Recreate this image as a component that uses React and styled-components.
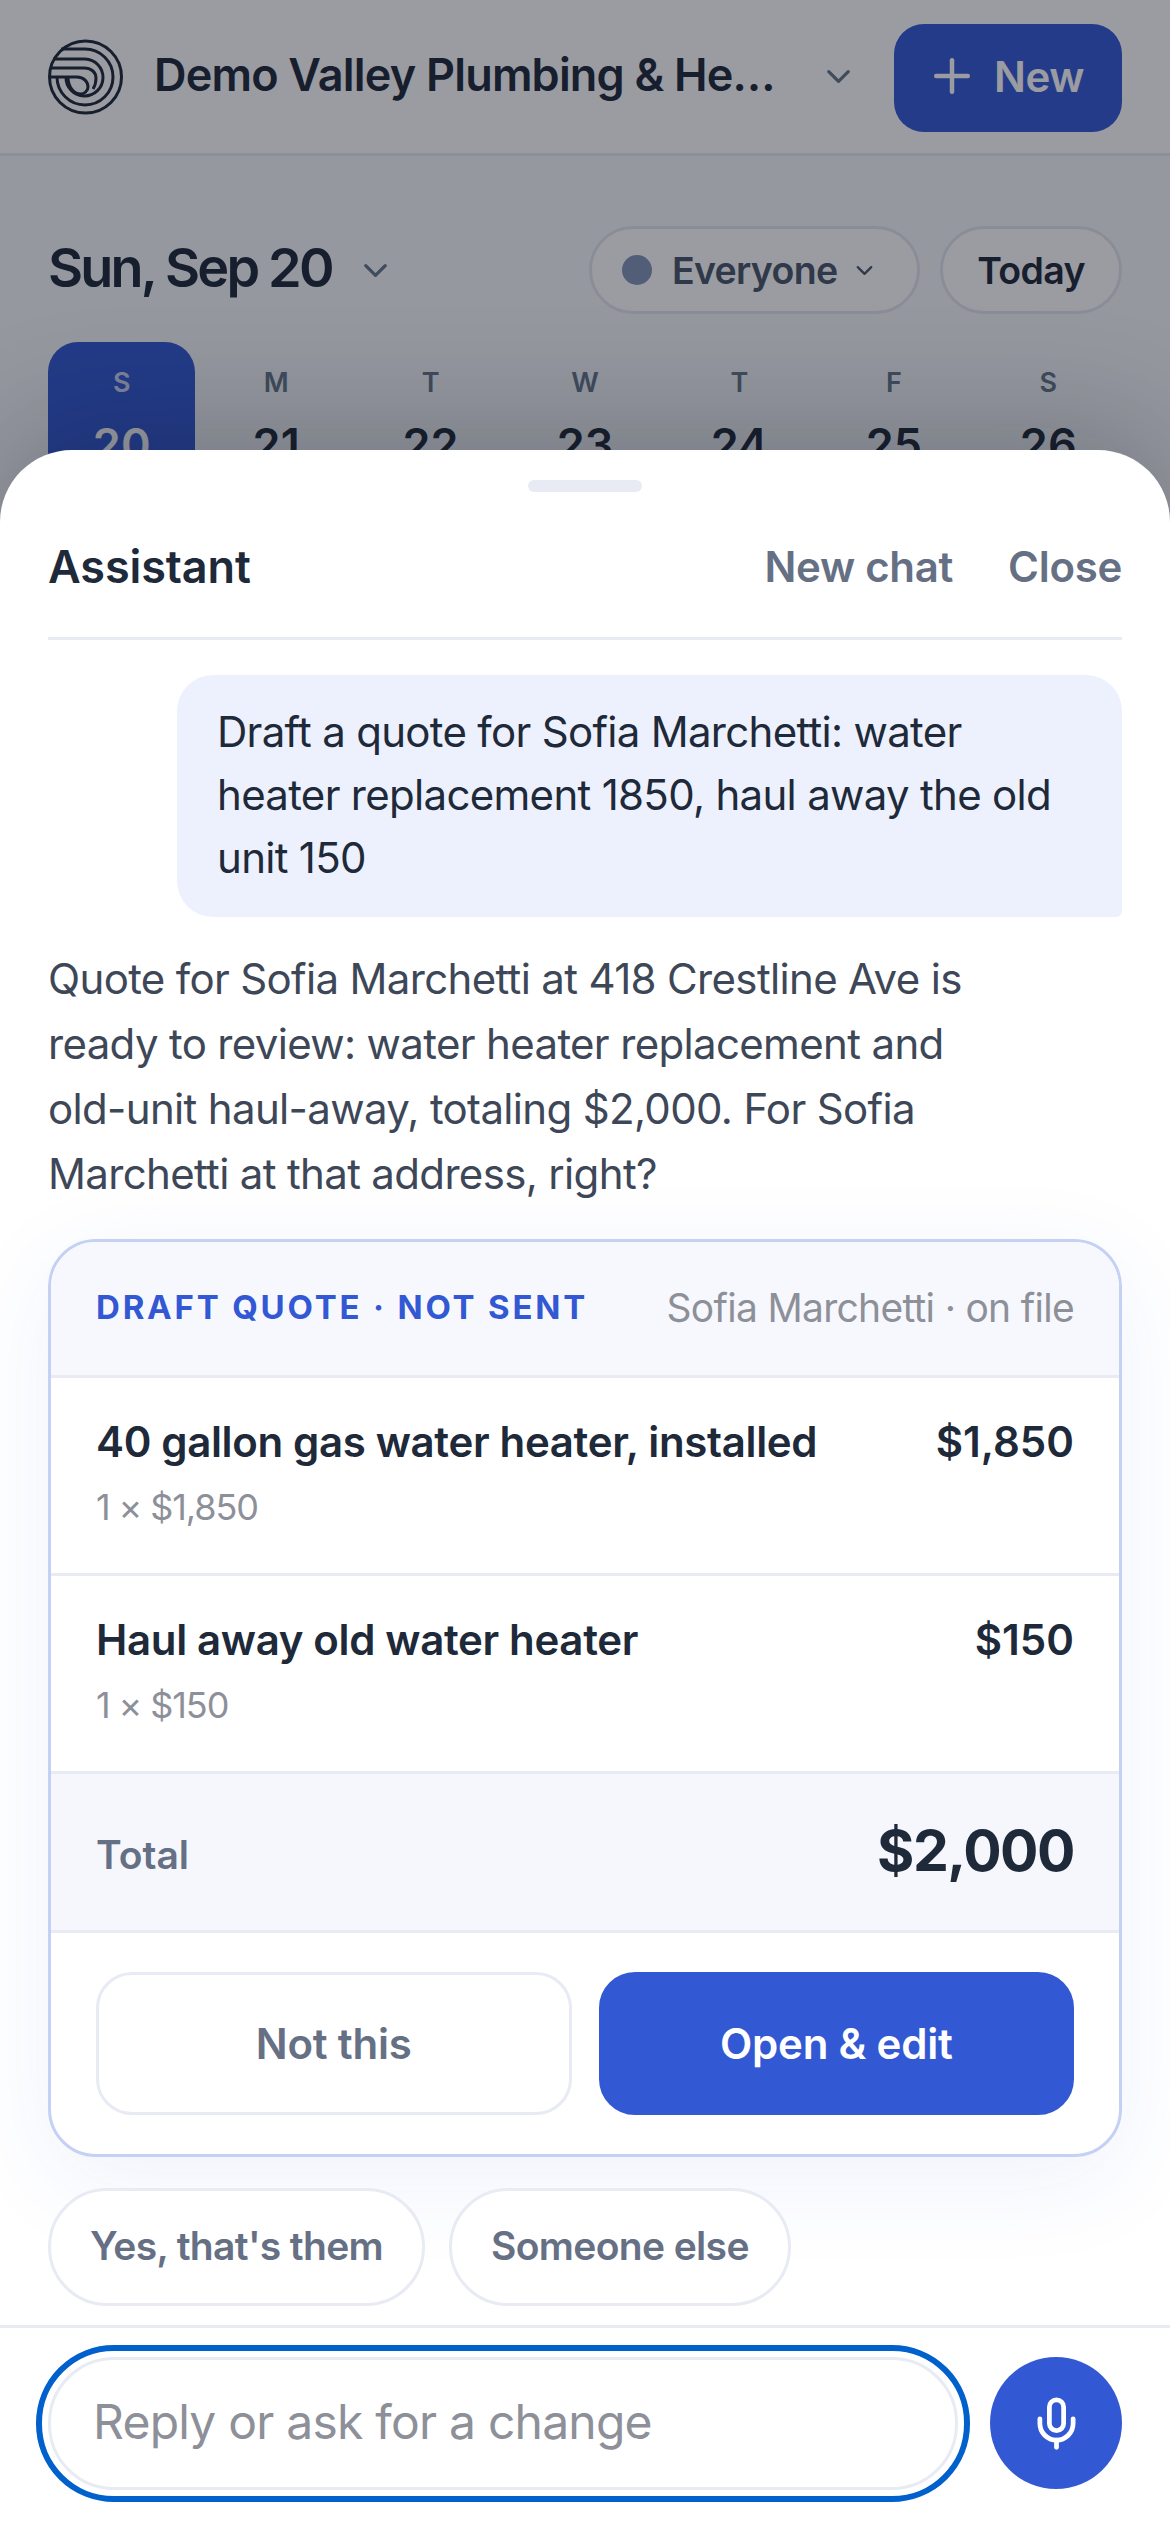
import React from "react";
import styled, { createGlobalStyle } from "styled-components";
import { ChevronDown, Plus, Mic } from "lucide-react";

const Global = createGlobalStyle`
  html, body { margin: 0; padding: 0; background: #fff; }
  * { box-sizing: border-box; }
  body { font-family: Inter, "Liberation Sans", sans-serif; color: #1e2939; }
`;

const Page = styled.div`
  position: relative;
  width: 1170px;
  height: 2532px;
  overflow: hidden;
  background: #f7f8fb;
`;
const TopBar = styled.header`
  display: flex;
  align-items: center;
  height: 156px;
  padding: 0 48px;
  background: #fff;
  border-bottom: 3px solid #e8ebf3;
`;
const Brand = styled.span`
  margin: 0 0 5px 31px;
  width: 630px;
  font-size: 45px;
  font-weight: 600;
  letter-spacing: -0.8px;
  white-space: nowrap;
`;
const BrandCaret = styled(ChevronDown)`
  margin-left: 35px;
  color: #64748b;
`;
const NewButton = styled.button`
  margin: 2px 0 0 auto;
  display: flex;
  align-items: center;
  justify-content: center;
  gap: 15px;
  width: 228px;
  height: 108px;
  padding: 0 7px 3px 0;
  border: 0;
  border-radius: 30px;
  background: #3358d4;
  color: #fff;
  font: 600 42px Inter, sans-serif;
  letter-spacing: -0.4px;
`;
const DateRow = styled.div`
  display: flex;
  align-items: center;
  padding: 70px 48px 0;
  height: 158px;
`;
const DateTitle = styled.h1`
  margin: 0 0 6px;
  font-size: 54px;
  font-weight: 600;
  letter-spacing: -2.8px;
`;
const DateCaret = styled(ChevronDown)`
  margin-left: 24px;
  color: #64748b;
`;
const Pill = styled.button`
  display: flex;
  align-items: center;
  height: 88px;
  border: 3px solid #e3e6ee;
  border-radius: 44px;
  background: #fff;
  font: 600 37.5px Inter, sans-serif;
  letter-spacing: -0.7px;
`;
const EveryonePill = styled(Pill)`
  margin-left: auto;
  width: 331px;
  padding: 0 0 0 30px;
  color: #475569;
`;
const Dot = styled.i`
  width: 30px;
  height: 30px;
  border-radius: 50%;
  background: #8493b8;
  margin-right: 20px;
`;
const PillCaret = styled(ChevronDown)`
  margin-left: 14px;
`;
const TodayPill = styled(Pill)`
  margin-left: 20px;
  width: 182px;
  justify-content: center;
  color: #1e2939;
`;
const DayStrip = styled.div`
  display: grid;
  grid-template-columns: repeat(7, 1fr);
  gap: 7px;
  padding: 0 48px;
  margin-top: 28px;
`;
const Day = styled.div`
  display: flex;
  flex-direction: column;
  align-items: center;
  height: 150px;
  padding-top: 24px;
  border-radius: 30px;
  background: ${(p) => (p.$on ? "#3358d4" : "transparent")};
  color: ${(p) => (p.$on ? "#fff" : "#1e2939")};
`;
const DayLetter = styled.span`
  font-size: 27px;
  font-weight: 600;
  opacity: ${(p) => (p.$on ? 0.75 : 1)};
  color: ${(p) => (p.$on ? "#fff" : "#64748b")};
`;
const DayNum = styled.span`
  margin-top: 18px;
  font-size: 45px;
  font-weight: 600;
`;
const Scrim = styled.div`
  position: absolute;
  inset: 0;
  background: rgba(15, 18, 32, 0.42);
`;
const Sheet = styled.section`
  position: absolute;
  left: 0;
  right: 0;
  top: 450px;
  bottom: 0;
  display: flex;
  flex-direction: column;
  background: #fff;
  border-radius: 72px 72px 0 0;
  box-shadow: 0 -24px 120px rgba(15, 18, 32, 0.22);
`;
const Handle = styled.div`
  align-self: center;
  width: 114px;
  height: 12px;
  margin-top: 30px;
  border-radius: 6px;
  background: #e8ebf3;
`;
const SheetHead = styled.div`
  display: flex;
  align-items: center;
  margin: 0 48px;
  height: 148px;
  padding-top: 4px;
  border-bottom: 3px solid #e8ebf3;
`;
const SheetTitle = styled.h2`
  margin: 0;
  font-size: 45px;
  font-weight: 600;
  letter-spacing: -0.1px;
`;
const HeadLink = styled.button`
  margin-left: ${(p) => (p.$first ? "auto" : `${p.$gap}px`)};
  border: 0;
  padding: 0;
  background: none;
  color: #667085;
  font: 600 42px Inter, sans-serif;
  letter-spacing: -0.3px;
`;
const Thread = styled.div`
  flex: 1;
  display: flex;
  flex-direction: column;
  padding: 35px 48px 0;
`;
const Bubble = styled.div`
  margin-left: 129px;
  height: 242px;
  padding: 25px 40px;
  background: #edf1fd;
  border-radius: 36px 36px 6px 36px;
  font-size: 42px;
  line-height: 63px;
  letter-spacing: -0.7px;
  color: #1e2939;
`;
const Reply = styled.p`
  margin: 29px 0 0;
  font-size: 42px;
  line-height: 65px;
  letter-spacing: -0.66px;
  color: #3d4757;
`;
const Card = styled.div`
  margin-top: 33px;
  border: 3px solid #c4d1f5;
  border-radius: 48px;
  background: #fff;
  overflow: hidden;
  box-shadow: 0 24px 96px rgba(51, 88, 212, 0.08);
`;
const CardHead = styled.div`
  display: flex;
  align-items: center;
  justify-content: space-between;
  height: 136px;
  padding: 0 45px 3px;
  background: #f7f8fd;
  border-bottom: 3px solid #e8ebf3;
`;
const Kicker = styled.span`
  font-size: 33px;
  font-weight: 700;
  letter-spacing: 2.8px;
  color: #3358d4;
`;
const Meta = styled.span`
  font-size: 39px;
  letter-spacing: -0.7px;
  color: #8d9099;
`;
const Line = styled.div`
  display: flex;
  justify-content: space-between;
  height: 198px;
  padding: 38px 45px 0;
  border-bottom: 3px solid #e8ebf3;
`;
const LineName = styled.div`
  font-size: 42px;
  line-height: 52px;
  font-weight: 600;
  letter-spacing: -0.34px;
`;
const LineQty = styled.div`
  margin-top: 14px;
  font-size: 36px;
  line-height: 50px;
  letter-spacing: -1.1px;
  color: #8d9099;
`;
const LinePrice = styled.div`
  font-size: 42px;
  line-height: 52px;
  font-weight: 600;
`;
const TotalRow = styled.div`
  display: flex;
  align-items: center;
  justify-content: space-between;
  height: 159px;
  padding: 0 45px 3px;
  background: #f6f7fc;
  border-bottom: 3px solid #e8ebf3;
`;
const TotalLabel = styled.span`
  font-size: 39px;
  font-weight: 600;
  color: #667085;
  margin-top: 8px;
`;
const TotalValue = styled.span`
  font-size: 57px;
  font-weight: 700;
  letter-spacing: -1.5px;
`;
const Actions = styled.div`
  display: grid;
  grid-template-columns: 1fr 1fr;
  gap: 27px;
  padding: 39px 45px 39px;
`;
const ActionButton = styled.button`
  height: 143px;
  border-radius: 36px;
  border: 3px solid ${(p) => (p.$primary ? "#3358d4" : "#e8ebf3")};
  background: ${(p) => (p.$primary ? "#3358d4" : "#fff")};
  color: ${(p) => (p.$primary ? "#fff" : "#667085")};
  font: 600 42px Inter, sans-serif;
  letter-spacing: -0.2px;
`;
const Chips = styled.div`
  display: flex;
  gap: 24px;
  margin-top: 31px;
`;
const Chip = styled.button`
  height: 118px;
  padding: 0 39px 3px;
  border: 3px solid #e8ebf3;
  border-radius: 59px;
  background: #fff;
  color: #667085;
  font: 600 39px Inter, sans-serif;
  letter-spacing: -0.65px;
`;
const Composer = styled.footer`
  display: flex;
  align-items: center;
  gap: 32px;
  height: 207px;
  padding: 0 48px 14px;
  border-top: 3px solid #e8ebf3;
  background: #fff;
`;
const ReplyBox = styled.div`
  flex: 1;
  display: flex;
  align-items: center;
  height: 133px;
  padding: 0 42px 3px;
  border: 3px solid #e8ebf3;
  border-radius: 66px;
  outline: 6px solid #0060cc;
  outline-offset: 6px;
  font-size: 48px;
  letter-spacing: -0.77px;
  color: #8d9099;
`;
const MicButton = styled.button`
  display: flex;
  align-items: center;
  justify-content: center;
  width: 132px;
  height: 132px;
  flex: none;
  border: 0;
  border-radius: 50%;
  background: #3358d4;
  color: #fff;
`;

const Logo = () => (
  <svg width="75" height="76" viewBox="0 0 75 76" fill="none" stroke="#1e2939" strokeWidth="3">
    <circle cx="37.5" cy="38" r="36" />
    <path d="M13 10H37A28 28 0 1 1 9 38" />
    <path d="M5 20H37A18.5 18.5 0 1 1 18 38" />
    <path d="M2 29H36C43 29 48 33 48 39C48 44 47 47 45 50" />
    <path d="M1 38H29C36 38 40 43 40 48C40 52 36 55 33 55C25 55 20 47 20 38" />
  </svg>
);

const days = [["S", 20], ["M", 21], ["T", 22], ["W", 23], ["T", 24], ["F", 25], ["S", 26]];

export default function App() {
  return (
    <Page>
      <Global />
      <TopBar>
        <Logo />
        <Brand>Demo Valley Plumbing &amp; He…</Brand>
        <BrandCaret size={39} strokeWidth={2} />
        <NewButton>
          <Plus size={54} strokeWidth={2} />
          New
        </NewButton>
      </TopBar>
      <DateRow>
        <DateTitle>Sun, Sep 20</DateTitle>
        <DateCaret size={39} strokeWidth={2} />
        <EveryonePill>
          <Dot />
          Everyone
          <PillCaret size={27} strokeWidth={2} />
        </EveryonePill>
        <TodayPill>Today</TodayPill>
      </DateRow>
      <DayStrip>
        {days.map(([l, n], i) => (
          <Day key={n} $on={i === 0}>
            <DayLetter $on={i === 0}>{l}</DayLetter>
            <DayNum>{n}</DayNum>
          </Day>
        ))}
      </DayStrip>
      <Scrim />
      <Sheet>
        <Handle />
        <SheetHead>
          <SheetTitle>Assistant</SheetTitle>
          <HeadLink $first>New chat</HeadLink>
          <HeadLink $gap={55}>Close</HeadLink>
        </SheetHead>
        <Thread>
          <Bubble>Draft a quote for Sofia Marchetti: water heater replacement 1850, haul away the old unit 150</Bubble>
          <Reply>
            Quote for Sofia Marchetti at 418 Crestline Ave is<br />
            ready to review: water heater replacement and<br />
            old-unit haul-away, totaling $2,000. For Sofia<br />
            Marchetti at that address, right?
          </Reply>
          <Card>
            <CardHead>
              <Kicker>DRAFT QUOTE · NOT SENT</Kicker>
              <Meta>Sofia Marchetti · on file</Meta>
            </CardHead>
            <Line>
              <div>
                <LineName>40 gallon gas water heater, installed</LineName>
                <LineQty>1 × $1,850</LineQty>
              </div>
              <LinePrice>$1,850</LinePrice>
            </Line>
            <Line>
              <div>
                <LineName>Haul away old water heater</LineName>
                <LineQty>1 × $150</LineQty>
              </div>
              <LinePrice>$150</LinePrice>
            </Line>
            <TotalRow>
              <TotalLabel>Total</TotalLabel>
              <TotalValue>$2,000</TotalValue>
            </TotalRow>
            <Actions>
              <ActionButton>Not this</ActionButton>
              <ActionButton $primary>Open &amp; edit</ActionButton>
            </Actions>
          </Card>
          <Chips>
            <Chip>Yes, that's them</Chip>
            <Chip>Someone else</Chip>
          </Chips>
        </Thread>
        <Composer>
          <ReplyBox>Reply or ask for a change</ReplyBox>
          <MicButton>
            <Mic size={57} strokeWidth={2} />
          </MicButton>
        </Composer>
      </Sheet>
    </Page>
  );
}
